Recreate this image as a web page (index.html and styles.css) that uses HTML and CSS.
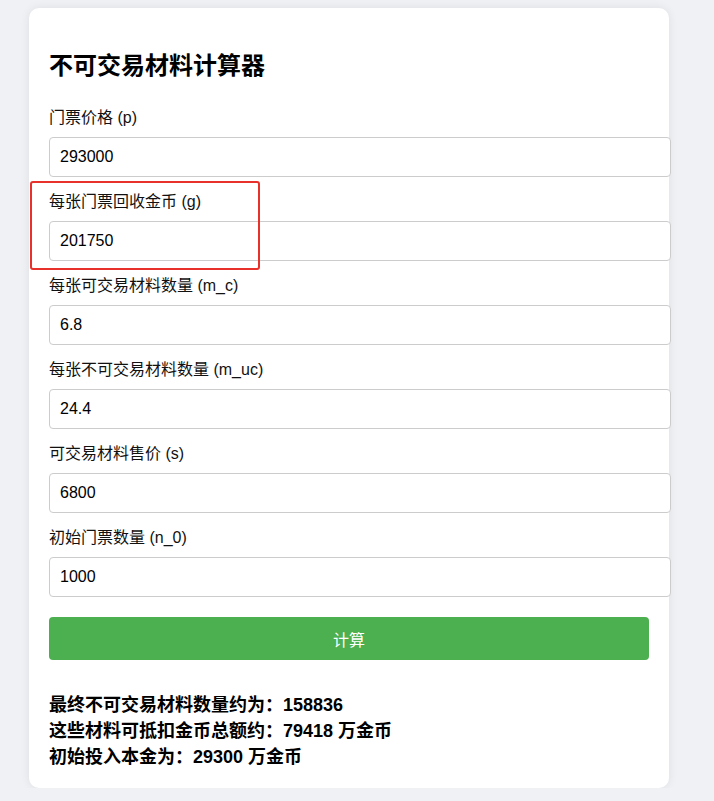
FILE: index.html
```html
<!DOCTYPE html>
<html lang="zh">
<head>
<meta charset="utf-8">
<title>不可交易材料计算器</title>
<link rel="stylesheet" href="styles.css">
</head>
<body>
<div class="card">
  <h2 class="title">不可交易材料计算器</h2>
  <div class="field">
    <label class="label">门票价格 (p)</label>
    <input class="input" type="text" value="293000">
  </div>
  <div class="field">
    <label class="label">每张门票回收金币 (g)</label>
    <input class="input" type="text" value="201750">
  </div>
  <div class="field">
    <label class="label">每张可交易材料数量 (m_c)</label>
    <input class="input" type="text" value="6.8">
  </div>
  <div class="field">
    <label class="label">每张不可交易材料数量 (m_uc)</label>
    <input class="input" type="text" value="24.4">
  </div>
  <div class="field">
    <label class="label">可交易材料售价 (s)</label>
    <input class="input" type="text" value="6800">
  </div>
  <div class="field">
    <label class="label">初始门票数量 (n_0)</label>
    <input class="input" type="text" value="1000">
  </div>
  <button class="btn" type="button">计算</button>
  <div class="result">
    <div>最终不可交易材料数量约为：158836</div>
    <div>这些材料可抵扣金币总额约：79418 万金币</div>
    <div>初始投入本金为：29300 万金币</div>
  </div>
  <div class="highlight"></div>
</div>
</body>
</html>
```

FILE: styles.css
```css
html, body {
  margin: 0;
  padding: 0;
}
body {
  background: #f0f1f5;
  font-family: "Liberation Sans", "Noto Sans CJK SC", sans-serif;
  padding: 8px 0 0 29px;
  color: #000;
}
.card {
  position: relative;
  width: 600px;
  background: #fff;
  padding: 20px 20px 18px 20px;
  border-radius: 10px;
  box-shadow: 0 0 10px rgba(0,0,0,0.08);
}
.title {
  font-size: 24px;
  font-weight: bold;
  margin: 24px 0 28px 0;
  line-height: 28px;
}
.field {
  margin-bottom: 0;
}
.label {
  display: block;
  font-size: 16px;
  line-height: 19px;
  margin-bottom: 10px;
  color: #111;
}
.input {
  display: block;
  width: 100%;
  padding: 10px;
  font-size: 16px;
  font-family: "Liberation Sans", "Noto Sans CJK SC", sans-serif;
  border: 1px solid #ccc;
  border-radius: 4px;
  margin: 0 0 15px 0;
  color: #000;
  box-sizing: content-box;
  height: 18px;
}
.btn {
  display: block;
  width: 100%;
  height: 43px;
  background: #4caf50;
  color: #fff;
  border: none;
  border-radius: 4px;
  font-size: 16px;
  font-family: "Liberation Sans", "Noto Sans CJK SC", sans-serif;
  margin-top: 20px;
}
.result {
  margin-top: 32px;
  font-weight: bold;
  font-size: 18px;
  line-height: 26px;
}
.highlight {
  position: absolute;
  left: 1px;
  top: 173px;
  width: 226px;
  height: 85px;
  border: 2px solid #e8312b;
  border-radius: 3px;
}
```
